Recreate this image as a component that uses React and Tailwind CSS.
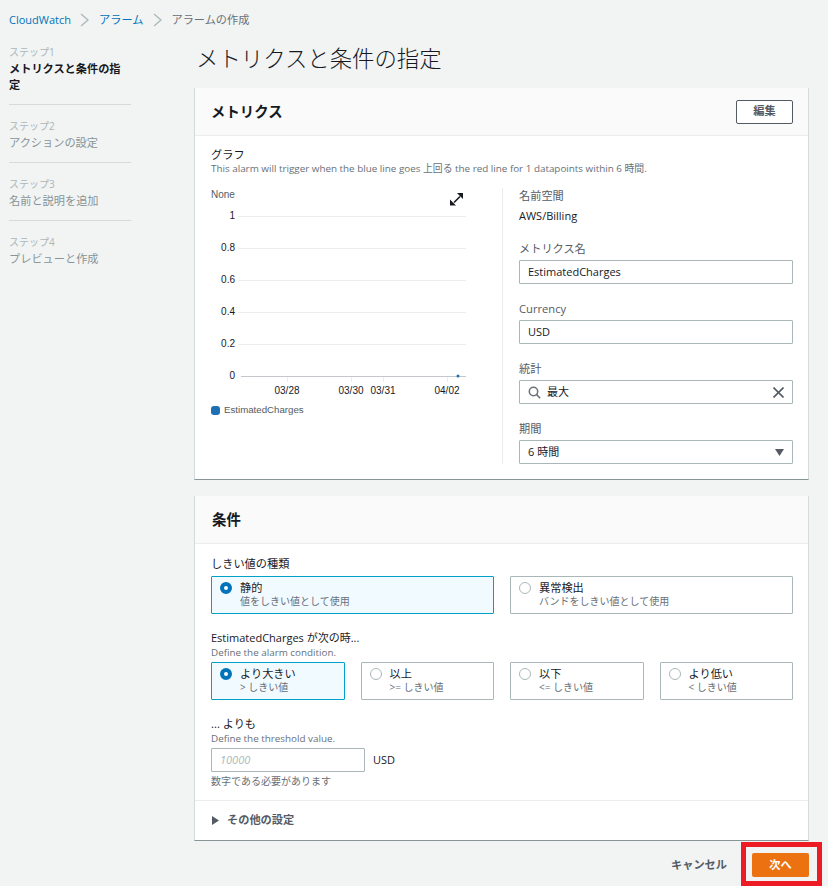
const steps = [
  { label: "ステップ1", name: "メトリクスと条件の指定", active: true },
  { label: "ステップ2", name: "アクションの設定" },
  { label: "ステップ3", name: "名前と説明を追加" },
  { label: "ステップ4", name: "プレビューと作成" },
];

const Chevron = () => (
  <svg width="9" height="14" viewBox="0 0 9 14" fill="none" stroke="#aab7b8" strokeWidth="1.3">
    <path d="M1 1l7 6-7 6" />
  </svg>
);

const Radio = ({ checked }) =>
  checked ? (
    <span className="mt-[1px] size-[12px] shrink-0 rounded-full border-[4px] border-[#0073bb] bg-white" />
  ) : (
    <span className="mt-[1px] size-[12px] shrink-0 rounded-full border border-[#aab7b8] bg-white" />
  );

const Tile = ({ title, sub, checked }) => (
  <div
    className={
      "flex h-[38px] gap-[8px] rounded-[1px] border px-[8px] pt-[4px] " +
      (checked ? "border-[#00a1c9] bg-[#f1faff]" : "border-[#aab7b8] bg-white")
    }
  >
    <Radio checked={checked} />
    <div>
      <div className="text-[11.2px] leading-[14px] text-[#16191f]">{title}</div>
      <div className="-mt-[1px] text-[10px] leading-[14px] text-[#687078]">{sub}</div>
    </div>
  </div>
);

const Field = ({ label, children }) => (
  <div>
    <div className="mb-[3px] text-[11.2px] leading-[16px] text-[#545b64]">{label}</div>
    {children}
  </div>
);

const Box = ({ children }) => (
  <div className="flex h-[24px] items-center rounded-[1px] border border-[#aab7b8] bg-white px-[8px] text-[11px] text-[#16191f]">
    {children}
  </div>
);

const Chart = () => {
  const ys = [
    ["1", 28],
    ["0.8", 60],
    ["0.6", 92],
    ["0.4", 124],
    ["0.2", 156],
  ];
  const xs = [
    ["03/28", 76],
    ["03/30", 140],
    ["03/31", 172],
    ["04/02", 236],
  ];
  return (
    <svg width="275" height="212" viewBox="0 0 275 212" className="block" style={{ fontFamily: "'Liberation Sans', sans-serif" }}>
      <text x="0" y="10" fontSize="10" fill="#545b64">None</text>
      {ys.map(([t, y]) => (
        <g key={t}>
          <line x1="27" x2="255" y1={y + 0.5} y2={y + 0.5} stroke="#eaeded" />
          <text x="24" y={y + 3} fontSize="10" textAnchor="end" fill="#16191f">{t}</text>
        </g>
      ))}
      <line x1="30" x2="255" y1="188.5" y2="188.5" stroke="#c4c8cc" />
      <text x="24" y="191" fontSize="10" textAnchor="end" fill="#16191f">0</text>
      {xs.map(([t, x]) => (
        <g key={t}>
          <line x1={x + 0.5} x2={x + 0.5} y1="189" y2="194" stroke="#eaeded" />
          <text x={x} y="206" fontSize="10" textAnchor="middle" fill="#16191f">{t}</text>
        </g>
      ))}
      <circle cx="247" cy="188" r="1.5" fill="#1f6fb5" />
      <path d="M243 14.5l6-6" stroke="#16191f" strokeWidth="1.6" fill="none" />
      <path d="M246 5h6v6zM239 17.5v-6l6 6z" fill="#16191f" />
    </svg>
  );
};

const App = () => {
  return (
    <div
      className="relative min-h-[886px] overflow-hidden bg-[#f2f3f3] text-[#16191f]"
      style={{ fontFamily: "'Open Sans', 'Noto Sans CJK JP', sans-serif" }}
    >
      <nav className="flex h-[40px] items-center pl-[9px] text-[11.2px]">
        <span className="text-[11px] text-[#0073bb]">CloudWatch</span>
        <span className="ml-[9px] mr-[10px] flex"><Chevron /></span>
        <span className="text-[#0073bb]">アラーム</span>
        <span className="ml-[10px] mr-[9px] flex"><Chevron /></span>
        <span className="text-[#687078]">アラームの作成</span>
      </nav>

      <div className="flex">
        <aside className="ml-[9px] w-[122px] shrink-0 pt-[3px]">
          {steps.map((s, i) => (
            <div key={s.label} className={i < 3 ? "mb-[12px] border-b border-[#d5dbdb] pb-[11px]" : ""}>
              <div className="text-[10px] leading-[18px] text-[#aab7b8]">{s.label}</div>
              <div className={"pr-[9px] text-[11.2px] leading-[16px] " + (s.active ? "font-bold text-[#16191f]" : "text-[#879596]")}>
                {s.name}
              </div>
            </div>
          ))}
        </aside>

        <main className="ml-[63px] w-[615px] shrink-0">
          <h1 className="mb-[13px] ml-[2px] h-[35px] text-[22.4px] font-light leading-[38px] text-[#16191f]">
            メトリクスと条件の指定
          </h1>

          <section className="border-x border-b border-x-[#d5dbdb] border-b-[#879596] bg-white">
            <header className="flex h-[48px] items-center justify-between border-b border-[#eaeded] bg-[#fafafa] pl-[16px] pr-[15px]">
              <h2 className="text-[14.4px] font-bold text-[#16191f]">メトリクス</h2>
              <button className="flex h-[24px] w-[57px] items-center justify-center rounded-[2px] border border-[#545b64] bg-white text-[11.2px] font-bold text-[#545b64]">
                編集
              </button>
            </header>
            <div className="pb-[15px] pl-[16px] pr-[15px] pt-[12px]">
              <div className="text-[11.2px] leading-[14px] text-[#16191f]">グラフ</div>
              <div className="whitespace-nowrap text-[9.86px] leading-[13px] text-[#687078]">
                This alarm will trigger when the blue line goes 上回る the red line for 1 datapoints within 6 時間.
              </div>
              <div className="mt-[13px] flex">
                <div className="w-[291px] shrink-0">
                  <Chart />
                  <div className="mt-[3px] flex items-center gap-[4px] text-[9.7px] text-[#545b64]" style={{ fontFamily: "'Liberation Sans', sans-serif" }}>
                    <span className="size-[9px] rounded-[3px] bg-[#1f6fb5]" />
                    EstimatedCharges
                  </div>
                </div>
                <div className="flex h-[276px] flex-1 flex-col gap-[4px] border-l border-[#eaeded] pl-[16px]">
                  <div className="h-[49px]">
                    <div className="text-[11.2px] leading-[16px] text-[#545b64]">名前空間</div>
                    <div className="mt-[4px] text-[11px] leading-[16px] text-[#16191f]">AWS/Billing</div>
                  </div>
                  <Field label="メトリクス名"><Box>EstimatedCharges</Box></Field>
                  <div className="mt-[13px]">
                    <Field label="Currency"><Box>USD</Box></Field>
                  </div>
                  <div className="mt-[13px]">
                    <Field label="統計">
                      <Box>
                        <svg width="13" height="13" viewBox="0 0 13 13" fill="none" stroke="#687078" strokeWidth="1.5" className="mr-[6px]">
                          <circle cx="5.5" cy="5.5" r="4.2" />
                          <path d="M8.6 8.6l3.6 3.6" />
                        </svg>
                        <span className="flex-1">最大</span>
                        <svg width="11" height="11" viewBox="0 0 11 11" fill="none" stroke="#545b64" strokeWidth="1.6">
                          <path d="M0.5 0.5l10 10M10.5 0.5l-10 10" />
                        </svg>
                      </Box>
                    </Field>
                  </div>
                  <div className="mt-[13px]">
                    <Field label="期間">
                      <Box>
                        <span className="flex-1">6 時間</span>
                        <svg width="9" height="7" viewBox="0 0 9 7" fill="#545b64">
                          <path d="M0 0h9L4.5 7z" />
                        </svg>
                      </Box>
                    </Field>
                  </div>
                </div>
              </div>
            </div>
          </section>

          <section className="mt-[16px] border-x border-b border-x-[#d5dbdb] border-b-[#879596] bg-white">
            <header className="flex h-[48px] items-center border-b border-[#eaeded] bg-[#fafafa] pl-[17px]">
              <h2 className="text-[14.4px] font-bold text-[#16191f]">条件</h2>
            </header>
            <div className="pb-[12px] pl-[16px] pr-[15px] pt-[12px]">
              <div className="mb-[4px] text-[11.2px] leading-[16px] text-[#16191f]">しきい値の種類</div>
              <div className="grid grid-cols-2 gap-[16px]">
                <Tile checked title="静的" sub="値をしきい値として使用" />
                <Tile title="異常検出" sub="バンドをしきい値として使用" />
              </div>

              <div className="mt-[16px] text-[11px] leading-[16px] text-[#16191f]">EstimatedCharges が次の時...</div>
              <div className="mb-[4px] text-[9.86px] leading-[12px] text-[#687078]">Define the alarm condition.</div>
              <div className="grid grid-cols-4 gap-[16px]">
                <Tile checked title="より大きい" sub="> しきい値" />
                <Tile title="以上" sub=">= しきい値" />
                <Tile title="以下" sub="<= しきい値" />
                <Tile title="より低い" sub="< しきい値" />
              </div>

              <div className="mt-[16px] text-[11.2px] leading-[16px] text-[#16191f]">... よりも</div>
              <div className="mb-[4px] text-[9.86px] leading-[12px] text-[#687078]">Define the threshold value.</div>
              <div className="flex items-center gap-[8px]">
                <div className="flex h-[24px] w-[154px] items-center rounded-[1px] border border-[#aab7b8] bg-white px-[8px] text-[11px] italic text-[#aab7b8]">
                  10000
                </div>
                <span className="text-[11px] text-[#16191f]">USD</span>
              </div>
              <div className="mt-[2px] text-[10px] leading-[14px] text-[#687078]">数字である必要があります</div>
            </div>
            <div className="flex h-[40px] items-center gap-[8px] border-t border-[#eaeded] pl-[17px]">
              <svg width="7" height="9" viewBox="0 0 7 9" fill="#545b64">
                <path d="M0 0l7 4.5L0 9z" />
              </svg>
              <span className="text-[11.2px] font-bold text-[#545b64]">その他の設定</span>
            </div>
          </section>

          <footer className="mt-[12px] flex h-[24px] items-center justify-end gap-[25px]">
            <span className="text-[11.2px] font-bold text-[#545b64]">キャンセル</span>
            <button className="h-[24px] w-[57px] rounded-[2px] bg-[#ec7211] text-[11.2px] font-bold text-white">
              次へ
            </button>
          </footer>
        </main>
      </div>

      <div className="pointer-events-none absolute left-[741px] top-[842px] h-[44px] w-[81px] border-[5px] border-[#ed1c24]" />
    </div>
  );
};

export default App;
